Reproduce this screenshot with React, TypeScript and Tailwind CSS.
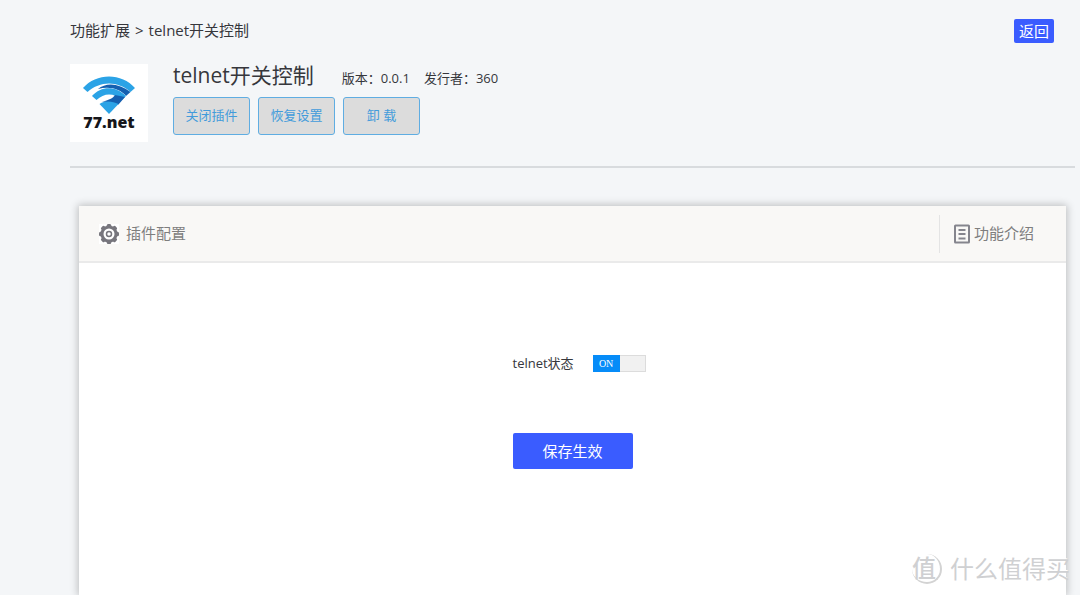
import { useState } from "react";

const pluginActions = ["关闭插件", "恢复设置", "卸 载"];

function BrandLogo() {
  return (
    <div className="flex size-[78px] shrink-0 flex-col items-center bg-white pt-3">
      <svg width="54" height="38" viewBox="0 0 54 38" aria-hidden="true">
        <path d="M1 12C14-3.500 40-3.500 53 12L48.500 16C36 4.500 18 4.500 5.500 16Z" fill="#2ba3e6" />
        <path d="M16 13C24 6 37 7 48.500 16L44 20C38 13 28 10 16 13Z" fill="#1560b0" />
        <path d="M10 20C19 9.500 34 9.500 44 20L40 24C32 16.500 22 16.500 14.500 24Z" fill="#2ba3e6" />
        <path d="M20 26C25 24 31 23 33 19L43 21L36.500 28.500H31C28 26 24 25.500 20 26Z" fill="#1560b0" />
        <path d="M17.500 28C23 24.500 30 25 36.500 28L27 38Z" fill="#2ba3e6" />
      </svg>
      <span className="font-['Open_Sans','Noto_Sans_CJK_SC',sans-serif] text-base leading-4 font-extrabold text-[#16161a]">
        77.net
      </span>
    </div>
  );
}

function GearIcon() {
  return (
    <svg width="20" height="20" viewBox="0 0 20 20" aria-hidden="true">
      <rect width="20" height="20" fill="#fff" />
      <g fill="#77767d">
        <circle cx="10" cy="10" r="8.600" />
        <rect x="7.700" y="0" width="4.600" height="20" rx="1.500" />
        <rect x="7.700" y="0" width="4.600" height="20" rx="1.500" transform="rotate(45 10 10)" />
        <rect x="7.700" y="0" width="4.600" height="20" rx="1.500" transform="rotate(90 10 10)" />
        <rect x="7.700" y="0" width="4.600" height="20" rx="1.500" transform="rotate(135 10 10)" />
      </g>
      <circle cx="10" cy="10" r="5.500" fill="#fff" />
      <circle cx="10" cy="10" r="2.500" fill="none" stroke="#77767d" strokeWidth="1.500" />
    </svg>
  );
}

function DocumentIcon() {
  return (
    <svg width="16" height="20" viewBox="0 0 16 20" fill="none" stroke="#85858d" aria-hidden="true">
      <rect x="1" y="1.500" width="14" height="17" rx="0.500" strokeWidth="2" />
      <path d="M4.500 6H11.500M4.500 10H11.500M4.500 14.500H11.500" strokeWidth="1.800" />
    </svg>
  );
}

function Watermark() {
  return (
    <div className="pointer-events-none absolute right-[10px] bottom-[10px] flex items-center gap-2 text-[#cfd0d2]">
      <span className="flex size-[30px] items-center rounded-full border-r-2 border-b-2 border-[#d3d3d3] text-2xl leading-6 font-medium">
        值
      </span>
      <span className="text-2xl leading-8 [text-shadow:-1px_-1px_0_#fff]">什么值得买</span>
    </div>
  );
}

export default function App() {
  const [enabled, setEnabled] = useState(true);

  return (
    <div className="relative flex min-h-screen flex-col overflow-hidden bg-[#f4f6f8] pr-[5px] pl-[70px] font-['Open_Sans','Noto_Sans_CJK_SC',sans-serif] text-[#36373c]">
      <header className="flex items-start justify-between pt-[19px] pr-[21px]">
        <nav className="flex gap-[5px] text-[15px] leading-[22px]">
          <a href="#extensions">功能扩展</a>
          <span>&gt;</span>
          <span>telnet开关控制</span>
        </nav>
        <button type="button" className="h-6 rounded-xs bg-[#3a5cff] px-[5px] text-[15px] leading-6 text-white">
          返回
        </button>
      </header>

      <section className="flex gap-[25px] border-b-2 border-[#d8dbde] pt-[21px] pb-6">
        <BrandLogo />
        <div>
          <div className="flex h-[33px] items-start gap-7">
            <h1 className="text-[21px] leading-[22px]">telnet开关控制</h1>
            <p className="flex gap-[14px] pt-1 text-[13px] leading-5">
              <span>版本：0.0.1</span>
              <span>发行者：360</span>
            </p>
          </div>
          <div className="flex gap-2">
            {pluginActions.map((label) => (
              <button
                key={label}
                type="button"
                className="h-[38px] w-[77px] rounded-[3px] border border-[#5fade2] bg-[#dcdcdc] text-[13px] text-[#429bdb]"
              >
                {label}
              </button>
            ))}
          </div>
        </div>
      </section>

      <main className="mx-[9px] mt-[38px] flex flex-1 flex-col bg-white shadow-[0_0_8px_1px_rgba(0,0,0,0.24)]">
        <div className="flex h-[57px] items-center justify-between border-b-2 border-[#eaeaea] bg-[#f9f8f6] pr-8 pl-5 text-[15px] text-[#7e7e7e]">
          <h2 className="flex items-center gap-[7px]">
            <GearIcon />
            插件配置
          </h2>
          <a href="#intro" className="flex h-[38px] items-center gap-1 border-l border-[#e4e4e4] pl-[14px]">
            <DocumentIcon />
            功能介绍
          </a>
        </div>
        <form className="flex flex-col pt-[90px]" onSubmit={(event) => event.preventDefault()}>
          <div className="mx-auto w-[120px]">
            <label className="flex w-max items-center gap-[19px] text-[13px] leading-5">
              telnet状态
              <input
                type="checkbox"
                role="switch"
                checked={enabled}
                onChange={() => setEnabled(!enabled)}
                className="peer sr-only"
              />
              <span className="flex h-[17px] w-[53px] border border-[#dcdcdc] bg-[#f1f1f1] peer-focus-visible:outline-2">
                <span
                  className={
                    enabled
                      ? "-my-px -ml-px w-[27px] bg-[#068cf8] text-center font-['Liberation_Serif',serif] text-[10px] leading-[17px] text-white"
                      : "ml-auto w-[26px] text-center font-['Liberation_Serif',serif] text-[10px] leading-[15px] text-[#777]"
                  }
                >
                  {enabled ? "ON" : "OFF"}
                </span>
              </span>
            </label>
            <button
              type="submit"
              className="mt-[60px] h-9 w-full rounded-xs bg-[#3a5cff] text-[15px] text-white"
            >
              保存生效
            </button>
          </div>
        </form>
      </main>
      <Watermark />
    </div>
  );
}
